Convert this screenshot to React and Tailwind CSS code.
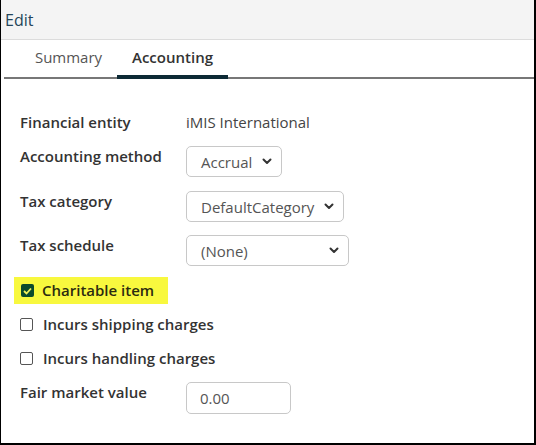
import React from "react";

const Chevron = () => (
  <svg width="10" height="7" viewBox="0 0 10 7" className="shrink-0">
    <path d="M1.5 1.5 L5 5 L8.5 1.5" fill="none" stroke="#333" strokeWidth="2" strokeLinecap="round" strokeLinejoin="round" />
  </svg>
);

const Select = ({ value, width }) => (
  <div
    className="h-[31px] flex items-center justify-between pl-[14px] pr-[9px] border border-[#c8c8c8] rounded-[5px] bg-white text-[15px] text-[#555]"
    style={{ width }}
  >
    <span className="pt-[2px]">{value}</span>
    <Chevron />
  </div>
);

const Check = ({ checked }) =>
  checked ? (
    <div className="w-[13px] h-[13px] rounded-[2px] bg-[#0b4a2c] flex items-center justify-center">
      <svg width="9" height="8" viewBox="0 0 9 8">
        <path d="M1 4 L3.5 6.5 L8 1.5" fill="none" stroke="#f2f25a" strokeWidth="1.8" />
      </svg>
    </div>
  ) : (
    <div className="w-[13px] h-[13px] rounded-[2px] border border-[#555] bg-white" />
  );

const FieldRow = ({ label, children, className = "" }) => (
  <div className={"flex items-start " + className}>
    <div className="w-[166px] shrink-0 font-semibold text-[#333] leading-[20px]">{label}</div>
    {children}
  </div>
);

export default function App() {
  return (
    <div
      className="w-[536px] h-[445px] overflow-hidden bg-white border-l border-r-2 border-b-2 border-black flex flex-col text-[15px]"
      style={{ fontFamily: "'Open Sans', 'Noto Sans', sans-serif" }}
    >
      {/* Header */}
      <div className="h-[40px] shrink-0 bg-[#f4f4f4] border-b border-[#dcdcdc] flex items-center pl-[4px] text-[16px] text-[#24445a]">
        Edit
      </div>

      {/* Tabs */}
      <div className="ml-[3px] h-[39px] shrink-0 flex items-end border-b-2 border-[#777]">
        <div className="w-[113px] h-full flex items-center justify-center pl-[16px] pb-[2px] text-[#555]">Summary</div>
        <div className="w-[111px] h-full flex items-center justify-center pb-[2px] font-semibold text-[#333] border-b-4 border-[#0d2a35] mb-[-2px]">
          Accounting
        </div>
      </div>

      {/* Form */}
      <div className="pl-[19px] pt-[33px] flex flex-col">
        <FieldRow label="Financial entity">
          <div className="leading-[20px] text-[#444]">iMIS International</div>
        </FieldRow>
        <FieldRow label="Accounting method" className="mt-[14px]">
          <Select value="Accrual" width={96} />
        </FieldRow>
        <FieldRow label="Tax category" className="mt-[14px]">
          <Select value="DefaultCategory" width={158} />
        </FieldRow>
        <FieldRow label="Tax schedule" className="mt-[13px]">
          <Select value="(None)" width={163} />
        </FieldRow>

        <div className="mt-[11px] ml-[-6px] w-[154px] h-[27px] bg-[#f8f83e] flex items-center pl-[7px] gap-[8px]">
          <Check checked />
          <span className="font-semibold text-[#2b2b10]">Charitable item</span>
        </div>

        <div className="mt-[10px] flex items-center gap-[10px] h-[20px]">
          <Check />
          <span className="font-semibold text-[#333]">Incurs shipping charges</span>
        </div>
        <div className="mt-[14px] flex items-center gap-[10px] h-[20px]">
          <Check />
          <span className="font-semibold text-[#333]">Incurs handling charges</span>
        </div>

        <FieldRow label="Fair market value" className="mt-[14px]">
          <div className="w-[105px] h-[32px] border border-[#c8c8c8] rounded-[5px] flex items-center pl-[13px] text-[#555]">
            0.00
          </div>
        </FieldRow>

        <div className="mt-[29px] ml-[168px] w-[61px] h-[10px] border-t border-x border-[#ccc] rounded-t-[4px]" />
      </div>
    </div>
  );
}
